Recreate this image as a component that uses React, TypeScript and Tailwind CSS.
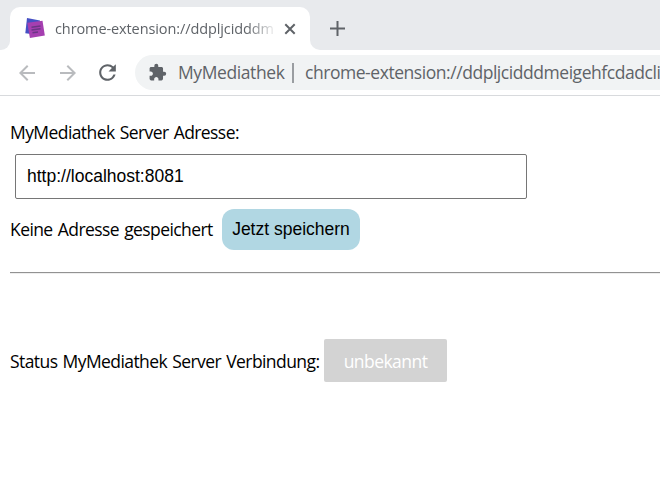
import { MdArrowBack, MdArrowForward, MdRefresh, MdExtension } from 'react-icons/md';

function Favicon() {
  return (
    <svg width="20" height="21" viewBox="0 0 20 21" className="shrink-0">
      <path d="M2 0 L15 2.5 L14 17 L0.3 15.3 Z" fill="#4550c4" />
      <path d="M2.3 4.8 L17.5 2.7 L19.8 17.5 L4.9 19.9 Z" fill="#a53fb0" />
      <path d="M6.5 9.2 L15.5 8 M6.5 12 L15.5 10.8 M7.5 14.8 L13 14" stroke="#6a3585" strokeWidth="1.5" />
    </svg>
  );
}

function TabStrip() {
  return (
    <div className="flex h-[50px] bg-[#e8eaed]">
      <div className="flex h-full w-[10px] items-end bg-white">
        <div className="h-full w-full rounded-br-[9px] bg-[#e8eaed]" />
      </div>
      <div className="h-full w-[300px] bg-[#e8eaed] pt-[7px]">
        <div className="flex h-[43px] items-center rounded-t-[10px] bg-white pl-[15px]">
          <Favicon />
          <div className="ml-[10px] w-[218px] whitespace-nowrap text-[14.5px] leading-5 tracking-[-0.1px] text-[#5f6368] [mask-image:linear-gradient(to_right,black_88%,transparent_102%)]">
            chrome-extension://ddpljcidddm
          </div>
          <svg width="12" height="12" viewBox="0 0 12 12" className="ml-[11px] shrink-0">
            <path d="M1.3 1.3 L10.7 10.7 M10.7 1.3 L1.3 10.7" stroke="#5f6368" strokeWidth="2" />
          </svg>
        </div>
      </div>
      <div className="h-full flex-1 bg-white">
        <div className="h-full rounded-bl-[10px] bg-[#e8eaed] pl-5 pt-[21px]">
          <svg width="15" height="15" viewBox="0 0 15 15">
            <path d="M7.5 0 V15 M0 7.5 H15" stroke="#5f6368" strokeWidth="2" />
          </svg>
        </div>
      </div>
    </div>
  );
}

function Toolbar() {
  return (
    <div className="flex h-[46px] items-start border-b border-[#d8dadd] bg-white pt-[5px]">
      <div className="flex h-[35px] w-[135px] shrink-0 items-center pl-[15px] text-[#b9bbbe]">
        <MdArrowBack size={24} />
        <MdArrowForward size={24} className="ml-[17px]" />
        <MdRefresh size={25} className="ml-[15px] text-[#5f6368]" />
      </div>
      <div className="flex h-[35px] flex-1 items-center overflow-hidden rounded-l-full bg-[#f1f3f4] pl-[13px] text-[17.5px] leading-6 text-[#5f6368]">
        <MdExtension size={19} className="shrink-0" />
        <span className="ml-[11px] w-[114px] shrink-0 whitespace-nowrap pb-px tracking-[-0.4px]">MyMediathek</span>
        <span className="h-5 w-[2px] shrink-0 bg-[#9a9da1]" />
        <span className="ml-[11px] shrink-0 whitespace-nowrap pb-px tracking-[-0.45px]">
          chrome-extension://ddpljcidddmeigehfcdadcli
        </span>
      </div>
    </div>
  );
}

export default function App() {
  return (
    <div className="h-[483px] w-[660px] overflow-hidden bg-white font-['Open_Sans','Noto_Sans',sans-serif]">
      <TabStrip />
      <Toolbar />
      <main className="pl-[10px] pt-6 text-[17.5px] leading-6 text-black">
        <label htmlFor="address" className="block h-6 tracking-[-0.58px] [word-spacing:1.2px]">MyMediathek Server Adresse:</label>
        <input
          id="address"
          defaultValue="http://localhost:8081"
          className="ml-[5px] mt-[10px] block h-[45px] w-[512px] rounded-[2px] border border-[#767676] px-[11px] font-['Liberation_Sans',Arial,sans-serif] text-[17.5px] outline-none"
        />
        <div className="mt-[10px] flex h-[41px] items-center">
          <span className="w-[212px] whitespace-nowrap pb-[2px] tracking-[-0.58px] [word-spacing:1.2px]">Keine Adresse gespeichert</span>
          <button className="h-[41px] w-[138px] whitespace-nowrap rounded-[12px] bg-[#b1d7e3] pb-[2px] font-['Liberation_Sans',Arial,sans-serif] text-[17.5px]">
            Jetzt speichern
          </button>
        </div>
        <hr className="mt-[22px] h-[2px] border-0 border-t border-[#929292] bg-[#eeeeee]" />
        <div className="mt-[65px] flex h-[43px] items-center">
          <span className="w-[314px] whitespace-nowrap pt-px tracking-[-0.58px] [word-spacing:1.2px]">Status MyMediathek Server Verbindung:</span>
          <span className="flex h-[43px] w-[123px] items-center justify-center rounded-[2px] bg-[#d3d3d3] pt-px tracking-[-0.55px] text-white">
            unbekannt
          </span>
        </div>
      </main>
    </div>
  );
}
